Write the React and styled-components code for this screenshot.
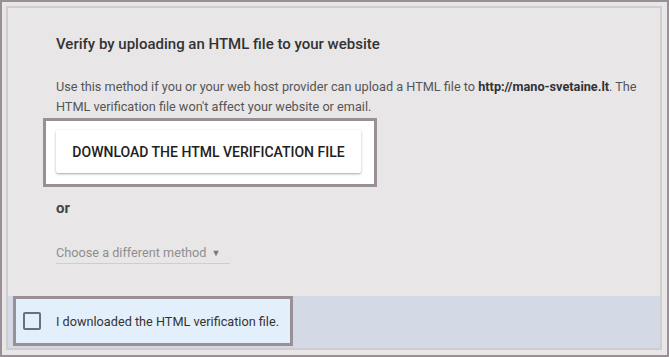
import React from "react";
import styled, { createGlobalStyle } from "styled-components";

const GlobalStyle = createGlobalStyle`
  html, body {
    margin: 0;
    padding: 0;
    background: #e8e6e7;
  }
  * {
    box-sizing: border-box;
  }
`;

const App = () => {
  return (
    <>
      <GlobalStyle />
      <Frame>
        <Panel>
          <Body>
            <Heading>Verify by uploading an HTML file to your website</Heading>
            <Description>
              Use this method if you or your web host provider can upload a HTML file to{" "}
              <strong>http://mano-svetaine.lt</strong>. The HTML verification file won't
              affect your website or email.
            </Description>
            <Highlight>
              <DownloadButton>Download the HTML verification file</DownloadButton>
            </Highlight>
            <OrLabel>or</OrLabel>
            <MethodSelect>
              Choose a different method <Caret>▼</Caret>
            </MethodSelect>
          </Body>
          <Footer>
            <CheckHighlight>
              <CheckBox />
              <CheckLabel>I downloaded the HTML verification file.</CheckLabel>
            </CheckHighlight>
          </Footer>
        </Panel>
      </Frame>
    </>
  );
};

export default App;

const Frame = styled.div`
  width: 669px;
  height: 357px;
  border: 2px solid #9b8f97;
  padding: 4px 5px 5px 4px;
  background: #e8e6e7;
  font-family: Roboto, "Liberation Sans", sans-serif;
`;

const Panel = styled.div`
  display: flex;
  flex-direction: column;
  height: 100%;
  border: 2px solid #cfcdce;
`;

const Body = styled.div`
  flex: 1;
  display: flex;
  flex-direction: column;
  align-items: flex-start;
  padding: 26px 8px 0 48px;
`;

const Heading = styled.h2`
  margin: 0;
  font-size: 15px;
  line-height: 20px;
  font-weight: 500;
  color: #333;
`;

const Description = styled.p`
  margin: 23px 0 0;
  font-size: 12.7px;
  line-height: 20px;
  color: #555;

  strong {
    font-weight: 700;
    color: #333;
  }
`;

const Highlight = styled.div`
  margin: 1px 0 0 -13px;
  padding: 9px 13px 11px 10px;
  border: 3px solid #9b8f97;
  background: #fff;
`;

const DownloadButton = styled.button`
  display: block;
  width: 305px;
  height: 43px;
  padding: 0;
  border: none;
  border-radius: 2px;
  background: #fff;
  box-shadow: 0 1px 3px rgba(0, 0, 0, 0.25), 0 1px 1px rgba(0, 0, 0, 0.12);
  font-family: Roboto, "Liberation Sans", sans-serif;
  font-size: 14px;
  font-weight: 500;
  text-transform: uppercase;
  color: #212121;
`;

const OrLabel = styled.div`
  margin-top: 11px;
  font-size: 15px;
  line-height: 20px;
  font-weight: 700;
  color: #444;
`;

const MethodSelect = styled.div`
  margin-top: 25px;
  width: 174px;
  border-bottom: 1px solid #cfcdce;
  font-size: 12.7px;
  line-height: 20px;
  color: #8f8f8f;
`;

const Caret = styled.span`
  margin-left: 2px;
  font-size: 9px;
  color: #777;
  vertical-align: 1px;
`;

const Footer = styled.div`
  height: 52px;
  background: #d3dae5;
  padding-left: 5px;
`;

const CheckHighlight = styled.div`
  display: flex;
  align-items: center;
  width: 280px;
  height: 50px;
  padding-left: 7px;
  border: 3px solid #9b8f97;
  background: #e3f0fb;
`;

const CheckBox = styled.span`
  width: 18px;
  height: 18px;
  border: 2px solid #6b7078;
  border-radius: 2px;
  flex-shrink: 0;
`;

const CheckLabel = styled.span`
  margin-left: 15px;
  font-size: 12.7px;
  color: #333;
`;
